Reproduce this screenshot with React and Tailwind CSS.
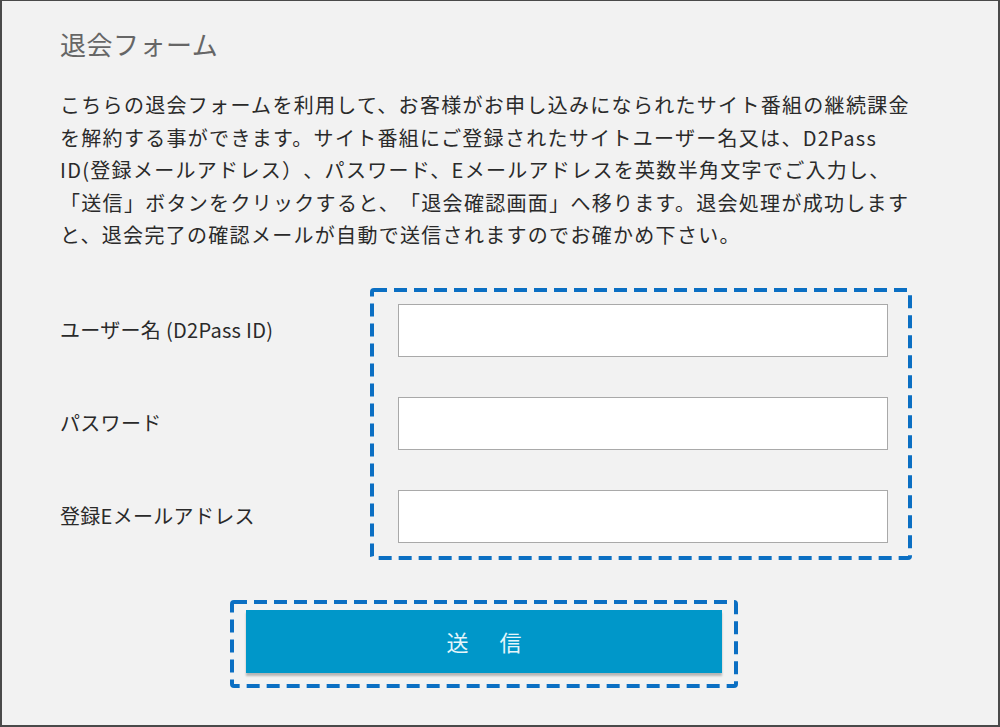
import React from 'react';

const paragraph = [
    'こちらの退会フォームを利用して、お客様がお申し込みになられたサイト番組の継続課金',
    'を解約する事ができます。サイト番組にご登録されたサイトユーザー名又は、D2Pass',
    'ID(登録メールアドレス）、パスワード、Eメールアドレスを英数半角文字でご入力し、',
    '「送信」ボタンをクリックすると、「退会確認画面」へ移ります。退会処理が成功します',
    'と、退会完了の確認メールが自動で送信されますのでお確かめ下さい。',
];

const fields = ['ユーザー名 (D2Pass ID)', 'パスワード', '登録Eメールアドレス'];

// dashed annotation outline drawn over a box of known size
function DashedFrame({ width, height, className, children }) {
    return (
        <div className={`relative ${className}`} style={{ width, height }}>
            {children}
            <svg className="absolute inset-0 pointer-events-none" width={width} height={height}>
                <rect
                    x="2" y="2" width={width - 4} height={height - 4} rx="2"
                    fill="none" stroke="#0b6fc3" strokeWidth="4" strokeDasharray="13 7"
                />
            </svg>
        </div>
    );
}

export default function App() {
    return (
        <div
            className="w-[1000px] h-[727px] bg-[#f2f2f2] border-2 border-t border-[#4a4a4a] overflow-hidden [text-spacing-trim:space-all]"
            style={{ fontFamily: '"Noto Sans CJK JP", "Noto Sans", sans-serif' }}
        >
            <div className="pl-[58px] pt-[27px] w-[960px]">
                {/* Title */}
                <h1 className="text-[26px] leading-[32px] text-[#666] font-normal tracking-[0.5px]">退会フォーム</h1>

                {/* Description */}
                <div className="mt-[29px] text-[20px] leading-[32.5px] text-[#2a2a2a] tracking-[1.3px]">
                    {paragraph.map((line, i) => (
                        <div key={i} className="whitespace-nowrap">{line}</div>
                    ))}
                </div>

                {/* Form */}
                <div className="flex mt-[36px]">
                    <div className="w-[310px] flex flex-col gap-[40px] pt-[16px]">
                        {fields.map((label) => (
                            <div key={label} className="h-[53px] flex items-center text-[20px] tracking-[0.3px] text-[#2a2a2a]">
                                {label}
                            </div>
                        ))}
                    </div>
                    <DashedFrame width={542} height={272} className="pt-[16px] pl-[28px] pr-[24px] flex flex-col gap-[40px]">
                        {fields.map((label) => (
                            <input
                                key={label}
                                type={label === 'パスワード' ? 'password' : 'text'}
                                className="h-[53px] w-full bg-white border border-[#a9a9a9] outline-none"
                            />
                        ))}
                    </DashedFrame>
                </div>

                {/* Submit */}
                <DashedFrame width={508} height={88} className="mt-[40px] ml-[170px] pt-[10px] px-[16px]">
                    <button className="w-full h-[63px] bg-[#0097c9] shadow-[0_3px_2px_rgba(0,0,0,0.25)] flex items-center justify-center gap-[31px] text-[22px] text-[#e6f6fb]">
                        <span>送</span>
                        <span>信</span>
                    </button>
                </DashedFrame>
            </div>
        </div>
    );
}
